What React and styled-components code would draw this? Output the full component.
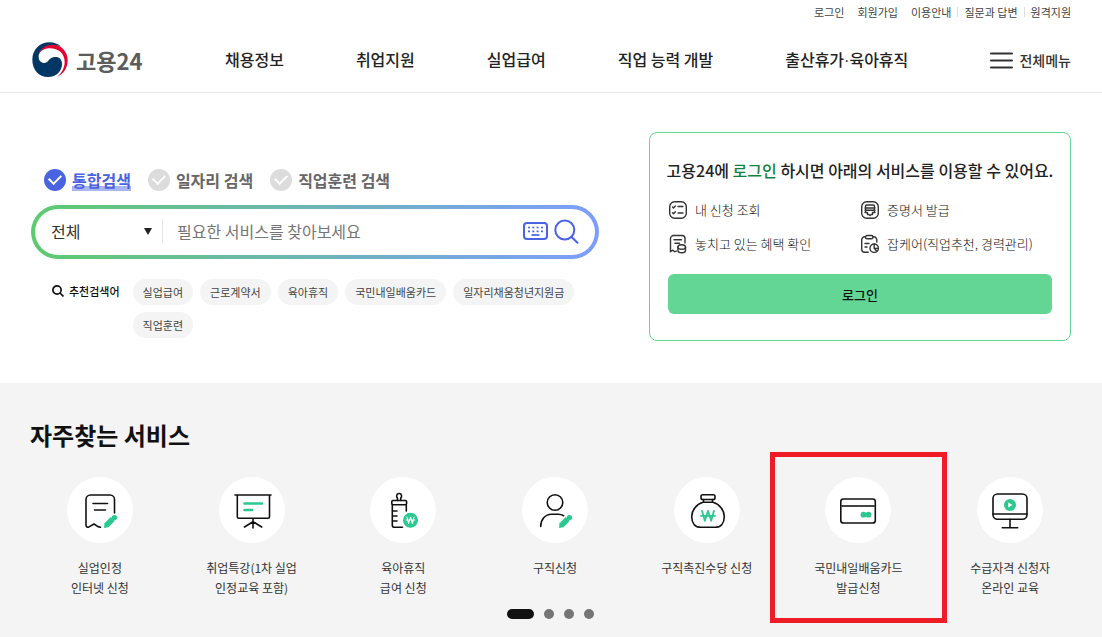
import React from "react";
import styled, { createGlobalStyle } from "styled-components";

const tags = [
  "실업급여",
  "근로계약서",
  "육아휴직",
  "국민내일배움카드",
  "일자리채움청년지원금",
  "직업훈련",
];

const Pencil = () => (
  <g fill="#2bc88f" stroke="none">
    <path d="M37 51l.5-4.700 6.200-6.200 4 4-6.200 6.200z" />
    <circle cx="47.400" cy="40.600" r="2.700" />
  </g>
);

const services = [
  {
    lines: ["실업인정", "인터넷 신청"],
    icon: (
      <>
        <path d="M47.500 36V22.500a4.500 4.500 0 0 0-4.500-4.500H23.500a4.500 4.500 0 0 0-4.500 4.500V48c0 2 1.500 2.800 3 1.900L27 47l4 2.600 2.500.6M26 26.500h14.500M27.500 33h11" />
        <Pencil />
      </>
    ),
  },
  {
    lines: ["취업특강(1차 실업", "인정교육 포함)"],
    icon: (
      <>
        <path d="M16 18h36M18.300 18v21.800a1.500 1.500 0 0 0 1.500 1.500h29.200a1.500 1.500 0 0 0 1.500-1.500V18M34 41.300V51M25.500 50L34 44.700l8.700 5.300" />
        <path d="M25.500 26.500h17.500M25.500 33h7.500" stroke="#2bc88f" strokeWidth="2.600" />
      </>
    ),
  },
  {
    lines: ["육아휴직", "급여 신청"],
    icon: (
      <>
        <path d="M27.500 23.500v-2.300c-1.400-1.300-1.300-4.700 1.600-4.700s3 3.400 1.600 4.700v2.300" />
        <rect x="21.800" y="23.500" width="14.800" height="4.300" rx="1.200" />
        <path d="M36.300 28v6M22.300 28v20.300a2 2 0 0 0 2 2H32.500M22.300 34H27M22.300 39H27M22.300 44H27" />
        <circle cx="40.500" cy="43.300" r="7.500" fill="#2bc88f" stroke="none" />
        <path d="M37 40.200l1.600 6.200 1.900-6.200 1.900 6.200 1.600-6.200M36.200 43h8.600" stroke="#fff" strokeWidth="1.100" />
      </>
    ),
  },
  {
    lines: ["구직신청"],
    icon: (
      <>
        <circle cx="33" cy="25.500" r="7.800" />
        <path d="M18.700 49.500c0-7 4.300-12.300 11-12.300h6.600c2 0 3.800.5 5.400 1.500" />
        <Pencil />
      </>
    ),
  },
  {
    lines: ["구직촉진수당 신청"],
    icon: (
      <>
        <rect x="27" y="17.700" width="14" height="4.800" rx="1.800" />
        <path d="M29.500 22.500v2.700M38.500 22.500v2.700M29 25.300h10M29 25.300C22 27.300 17.700 33.500 17.700 39.500c0 6.600 3.300 10.800 9.300 10.800h14c6 0 9.300-4.200 9.300-10.800 0-6-4.300-12.200-11.300-14.200" />
        <path d="M28 33.800l2.800 10L34 33.800l3.200 10 2.800-10M27 38.800h14" stroke="#2bc88f" strokeWidth="1.800" />
      </>
    ),
  },
  {
    lines: ["국민내일배움카드", "발급신청"],
    marked: true,
    icon: (
      <>
        <rect x="15.800" y="22" width="34.500" height="24" rx="2.600" />
        <path d="M16 29h34" stroke="#444" strokeWidth="2" strokeLinecap="butt" />
        <g fill="#2bc88f" stroke="none">
          <circle cx="38.500" cy="37.700" r="2.900" />
          <circle cx="43.500" cy="37.700" r="2.900" />
        </g>
      </>
    ),
  },
  {
    lines: ["수급자격 신청자", "온라인 교육"],
    icon: (
      <>
        <rect x="16" y="17" width="34" height="25.300" rx="4.500" />
        <path d="M16 37h34M33 42.300v8.200M25.300 50.700h15.400" />
        <circle cx="33" cy="28" r="6" fill="#2bc88f" stroke="none" />
        <path d="M31.200 25.400v5.200l4.300-2.600z" fill="#fff" stroke="none" />
      </>
    ),
  },
];

const benefits = [
  {
    name: "내 신청 조회",
    icon: (
      <>
        <rect x="1.700" y="1.700" width="16.600" height="16.600" rx="5" />
        <path d="M4.500 7l1 1 1.900-2M4.500 12.700l1 1 1.900-2M10 6.500h5M10 13h5" />
      </>
    ),
  },
  {
    name: "증명서 발급",
    icon: (
      <>
        <rect x="1.700" y="1.700" width="16.600" height="16.600" rx="5" />
        <path d="M5.500 12V6.200A1.200 1.200 0 0 1 6.700 5h6.600a1.200 1.200 0 0 1 1.200 1.200V12M5 8h10M5 10.300h10M5 12.500h2.500v2h1.300l1.200 1 1.200-1h1.300v-2H15" />
      </>
    ),
  },
  {
    name: "놓치고 있는 혜택 확인",
    icon: (
      <>
        <path d="M17 9V4.500a3 3 0 0 0-3-3H5.500a3 3 0 0 0-3 3v13.200l2.300-1.500 2 1.500 1.700-.6M6 5.800h7.500M7 9.200h4.500" />
        <ellipse cx="13.700" cy="13" rx="3.800" ry="2.300" />
        <path d="M9.900 13v3.200c0 1.400 1.700 2.500 3.800 2.500s3.800-1.100 3.800-2.500V13" />
      </>
    ),
  },
  {
    name: "잡케어(직업추천, 경력관리)",
    icon: (
      <>
        <path d="M5.500 2.800H4.700a3 3 0 0 0-3 3v9.400a3 3 0 0 0 3 3h3.500M13 2.800h.8a3 3 0 0 1 3 3V8M5 9.500h4M5 13h2" />
        <rect x="5.500" y="1.500" width="7.500" height="3.300" rx="1.600" />
        <circle cx="14.200" cy="14.200" r="4.200" />
        <path d="M14.200 10.200v4.200h4M14.200 14.300l2.600 2.900" />
      </>
    ),
  },
];

const App = () => {
  return (
    <Page>
      <GlobalStyle />
      <Header>
        <Util>
          <a href="#login">로그인</a>
          <a href="#join">회원가입</a>
          <a href="#guide">이용안내</a>
          <a href="#qna" className="line">
            질문과 답변
          </a>
          <a href="#remote" className="line">
            원격지원
          </a>
        </Util>
        <MainBar>
          <Logo href="#home">
            <svg width="36" height="36" viewBox="97 128 108 108" aria-hidden="true">
              <path
                fill="#e60032"
                d="M117 168C119 150 135 134 154 134C183 134 204 156 204 182C204 206 192 224 173 232C186 221 195 206 195 188C195 162 176 147 151 147C134 147 122 153 117 168Z"
              />
              <path
                fill="#003764"
                d="M186 142C175 134 163 129 150 129C120 129 98 151 98 181C98 212 118 233 145 233C170 233 187 216 187 194C187 180 179 173 168 173C156 173 151 178 146 184C141 190 135 192 129 190C120 187 116 180 117 169C119 151 135 137 155 137C166 137 177 138 186 142Z"
              />
            </svg>
            <span>고용24</span>
          </Logo>
          <Nav>
            <a href="#jobs">채용정보</a>
            <a href="#support">취업지원</a>
            <a href="#benefit">실업급여</a>
            <a href="#skill">직업 능력 개발</a>
            <a href="#leave">
              출산휴가<i>·</i>육아휴직
            </a>
          </Nav>
          <MenuButton type="button">
            <svg width="23" height="17" viewBox="0 0 23 17" aria-hidden="true">
              <path d="M1 1.500h21M1 8.500h21M1 15.500h21" stroke="#333" strokeWidth="2" strokeLinecap="round" />
            </svg>
            전체메뉴
          </MenuButton>
        </MainBar>
      </Header>

      <Hero>
        <Search>
          <Tabs>
            <Tab>
              <input type="radio" name="kind" defaultChecked />
              <span>통합검색</span>
            </Tab>
            <Tab>
              <input type="radio" name="kind" />
              <span>일자리 검색</span>
            </Tab>
            <Tab>
              <input type="radio" name="kind" />
              <span>직업훈련 검색</span>
            </Tab>
          </Tabs>
          <SearchBox>
            <Scope aria-label="검색 범위">
              <option>전체</option>
            </Scope>
            <Keyword aria-label="검색어" placeholder="필요한 서비스를 찾아보세요" />
            <IconButton type="button" aria-label="가상 키보드">
              <svg width="25" height="18" viewBox="0 0 25 18" fill="none" stroke="#4a63e0">
                <rect x="1" y="1" width="23" height="16" rx="3" strokeWidth="2" />
                <path
                  d="M5 5.500h2M9.300 5.500h2M13.600 5.500h2M18 5.500h2M5 9.300h2M9.300 9.300h2M13.600 9.300h2M18 9.300h2"
                  strokeWidth="1.700"
                />
                <path d="M8.500 13h8" strokeWidth="1.700" />
              </svg>
            </IconButton>
            <IconButton type="button" aria-label="검색">
              <svg width="25" height="25" viewBox="0 0 25 25" fill="none" stroke="#4a63e0" strokeWidth="2">
                <circle cx="10.800" cy="11" r="9.500" />
                <path d="M17.500 18l6 5.700" strokeLinecap="round" />
              </svg>
            </IconButton>
          </SearchBox>
          <Recommend>
            <h2>
              <svg width="12" height="12" viewBox="0 0 12 12" fill="none" stroke="#111" strokeWidth="1.700" aria-hidden="true">
                <circle cx="5" cy="5" r="4.100" />
                <path d="M8 8l3.500 3.500" />
              </svg>
              추천검색어
            </h2>
            <Tags>
              {tags.map((tag) => (
                <Tag href="#tag" key={tag}>
                  {tag}
                </Tag>
              ))}
            </Tags>
          </Recommend>
        </Search>

        <LoginCard>
          <h2>
            고용24에 <em>로그인</em> 하시면 아래의 서비스를 이용할 수 있어요.
          </h2>
          <Benefits>
            {benefits.map((item) => (
              <li key={item.name}>
                <svg width="20" height="20" viewBox="0 0 20 20" aria-hidden="true">
                  {item.icon}
                </svg>
                {item.name}
              </li>
            ))}
          </Benefits>
          <LoginButton type="button">로그인</LoginButton>
        </LoginCard>
      </Hero>

      <Services>
        <h2>자주찾는 서비스</h2>
        <ServiceList>
          {services.map((item) => (
            <Service href="#service" key={item.lines[0]} $marked={item.marked}>
              <svg width="66" height="66" viewBox="0 0 66 66" aria-hidden="true">
                {item.icon}
              </svg>
              <p>
                {item.lines.map((line) => (
                  <span key={line}>{line}</span>
                ))}
              </p>
            </Service>
          ))}
        </ServiceList>
        <Pager>
          {[1, 2, 3, 4].map((n) => (
            <Dot type="button" key={n} $active={n === 1} aria-label={`${n}번째 목록`} />
          ))}
        </Pager>
      </Services>
    </Page>
  );
};

// ------------------STYLED COMPONENTS ---------------------

const GlobalStyle = createGlobalStyle`
  * {
    margin: 0;
    padding: 0;
    box-sizing: border-box;
  }
  body, button, input, select {
    font-family: "Noto Sans CJK KR", "Noto Sans", sans-serif;
  }
  body {
    background: white;
    color: #333;
  }
  a {
    color: inherit;
    text-decoration: none;
  }
  button {
    border: none;
    background: none;
    color: inherit;
    cursor: pointer;
  }
  svg {
    flex-shrink: 0;
  }
`;
const Page = styled.div`
  display: flex;
  flex-direction: column;
  min-height: 100vh;
`;
const Header = styled.header`
  padding: 4px 31px 0;
  border-bottom: 1px solid #e8e8e8;
`;
const Util = styled.nav`
  display: flex;
  justify-content: flex-end;
  gap: 13px;
  font-size: 11px;
  line-height: 16px;
  color: #444;
  .line {
    display: flex;
    align-items: center;
    &::before {
      content: "";
      width: 1px;
      height: 10px;
      margin: 0 6px 0 -7px;
      background: #ddd;
    }
  }
`;
const MainBar = styled.div`
  display: flex;
  align-items: center;
  height: 72px;
  padding-top: 8px;
`;
const Logo = styled.a`
  display: flex;
  align-items: center;
  gap: 8px;
  width: 194px;
  padding-left: 1px;
  font-size: 22px;
  font-weight: 700;
  line-height: 32px;
  color: #5c5c5c;
`;
const Nav = styled.nav`
  display: flex;
  gap: 72px;
  font-size: 16px;
  font-weight: 500;
  line-height: 24px;
  color: #222;
  i {
    font-family: "Liberation Sans", sans-serif;
    font-style: normal;
  }
`;
const MenuButton = styled.button`
  display: flex;
  align-items: center;
  gap: 6px;
  margin-left: auto;
  font-size: 14px;
  font-weight: 500;
  line-height: 24px;
`;
const Hero = styled.main`
  display: grid;
  grid-template-columns: minmax(0, 568fr) minmax(0, 422fr);
  gap: 50px;
  padding: 39px 31px 42px;
`;
const Search = styled.section`
  padding-top: 36px;
`;
const Tabs = styled.div`
  display: flex;
  gap: 17px;
  padding-left: 13px;
`;
const Tab = styled.label`
  display: flex;
  align-items: center;
  gap: 6px;
  font-size: 16px;
  font-weight: 700;
  line-height: 24px;
  color: #666;
  input {
    display: grid;
    place-items: center;
    width: 22px;
    height: 22px;
    appearance: none;
    border-radius: 50%;
    background: #dcdcdc;
    &::after {
      content: "";
      width: 10px;
      height: 6px;
      margin-bottom: 4px;
      border: solid white;
      border-width: 0 0 2px 2px;
      rotate: -45deg;
    }
  }
  input:checked {
    background: #4a63e0;
  }
  input:checked + span {
    color: #4a63e0;
    background: linear-gradient(#aab6f3, #aab6f3) 0 18px / 100% 5px no-repeat;
  }
`;
const SearchBox = styled.div`
  display: flex;
  align-items: center;
  height: 54px;
  margin-top: 13px;
  padding: 0 16px 2px;
  border: 4px solid transparent;
  border-radius: 27px;
  background:
    linear-gradient(white, white) padding-box,
    linear-gradient(90deg, #5dcb6e, #7e9dff) border-box;
`;
const Scope = styled.select`
  width: 112px;
  height: 24px;
  appearance: none;
  border: none;
  border-right: 1px solid #e5e5e5;
  background: url("data:image/svg+xml,%3Csvg xmlns='http://www.w3.org/2000/svg' width='8' height='7'%3E%3Cpath d='M0 0h8L4 7z' fill='%23222'/%3E%3C/svg%3E")
    no-repeat right 10px center;
  font-size: 16px;
  color: #333;
`;
const Keyword = styled.input`
  flex: 1;
  min-width: 0;
  height: 32px;
  padding: 0 14px;
  border: none;
  outline: none;
  font-size: 16px;
  &::placeholder {
    color: #757575;
  }
`;
const IconButton = styled.button`
  display: flex;
  align-items: center;
  & + & {
    margin-left: 6px;
  }
`;
const Recommend = styled.div`
  display: flex;
  align-items: flex-start;
  gap: 13px;
  padding: 20px 20px 0 21px;
  h2 {
    display: flex;
    align-items: center;
    flex-shrink: 0;
    gap: 5px;
    font-size: 11px;
    font-weight: 500;
    line-height: 24px;
    color: #111;
  }
`;
const Tags = styled.div`
  display: flex;
  flex-wrap: wrap;
  gap: 7px;
`;
const Tag = styled.a`
  padding: 0 10px;
  border-radius: 13px;
  background: #f4f4f4;
  font-size: 11px;
  line-height: 26px;
  color: #444;
`;
const LoginCard = styled.section`
  padding: 24px 18px 26px;
  border: 1px solid #63d594;
  border-radius: 8px;
  h2 {
    margin: 0 -12px;
    font-size: 16px;
    font-weight: 500;
    line-height: 26px;
    text-align: center;
    white-space: nowrap;
    color: #222;
  }
  em {
    font-style: normal;
    color: #0f8442;
  }
`;
const Benefits = styled.ul`
  display: grid;
  grid-template-columns: 1fr 1fr;
  gap: 14px 0;
  margin-top: 17px;
  list-style: none;
  li {
    display: flex;
    align-items: center;
    gap: 7px;
    font-size: 13px;
    font-weight: 300;
    line-height: 20px;
    white-space: nowrap;
    color: #111;
  }
  svg {
    fill: none;
    stroke: #333;
    stroke-width: 1.4;
    stroke-linecap: round;
    stroke-linejoin: round;
  }
`;
const LoginButton = styled.button`
  width: 100%;
  height: 40px;
  margin-top: 20px;
  border-radius: 6px;
  background: #63d594;
  font-size: 13px;
  font-weight: 500;
  color: #111;
`;
const Services = styled.section`
  flex: 1;
  padding: 34px 16px 18px 24px;
  background: #f4f4f4;
  h2 {
    padding-left: 6px;
    font-size: 24px;
    font-weight: 700;
    line-height: 36px;
    color: #111;
  }
`;
const ServiceList = styled.div`
  display: grid;
  grid-template-columns: repeat(7, 1fr);
  margin-top: 24px;
`;
const Service = styled.a`
  position: relative;
  display: flex;
  flex-direction: column;
  align-items: center;
  gap: 15px;
  font-size: 12px;
  line-height: 20px;
  text-align: center;
  svg {
    border-radius: 50%;
    background: white;
    fill: none;
    stroke: #111;
    stroke-width: 1.6;
    stroke-linecap: round;
    stroke-linejoin: round;
  }
  span {
    display: block;
  }
  /* red frame around the highlighted service */
  &::after {
    content: "";
    display: ${({ $marked }) => ($marked ? "block" : "none")};
    position: absolute;
    inset: -25px -13px;
    border: 5px solid #ee1c25;
  }
`;
const Pager = styled.div`
  display: flex;
  justify-content: center;
  gap: 10px;
  margin-top: 11px;
  padding-right: 10px;
`;
const Dot = styled.button`
  width: ${({ $active }) => ($active ? "27px" : "10px")};
  height: 10px;
  border-radius: 5px;
  background: ${({ $active }) => ($active ? "#111" : "#757575")};
`;

export default App;
